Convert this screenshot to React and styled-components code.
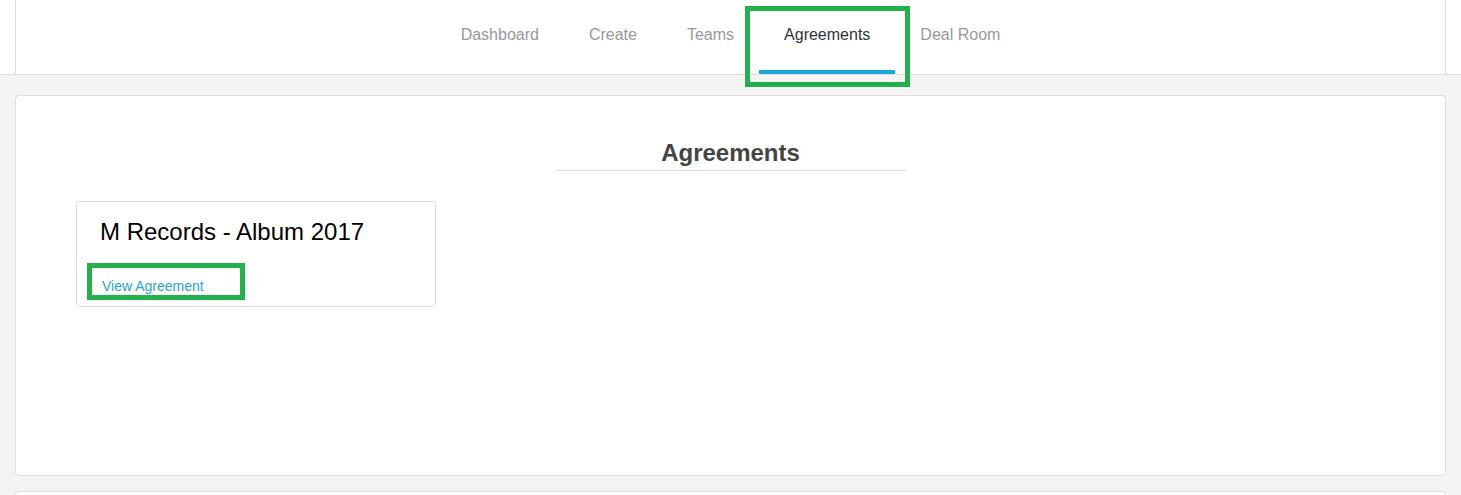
import React from 'react';
import styled, { createGlobalStyle } from 'styled-components';

const GlobalStyle = createGlobalStyle`
  body {
    margin: 0;
    background: #f4f4f4;
    font-family: "Liberation Sans", Arial, sans-serif;
  }
`;

// green highlight drawn over the reference
const highlight = `
  content: '';
  position: absolute;
  border: 5px solid #22b14c;
  box-sizing: border-box;
  pointer-events: none;
`;

const Header = styled.header`
  background: #fff;
  border-bottom: 1px solid #ddd;
`;

const HeaderInner = styled.div`
  margin: 0 15px;
  height: 74px;
  border-left: 1px solid #ddd;
  border-right: 1px solid #ddd;
  display: flex;
  justify-content: center;
`;

const NavItem = styled.a`
  position: relative;
  padding: 25px 25px 0;
  height: 74px;
  box-sizing: border-box;
  line-height: 20px;
  font-size: 16px;
  color: ${p => (p.$active ? '#333' : '#999')};
  text-decoration: none;
  cursor: pointer;

  ${p => p.$active && `
    &::before {
      content: '';
      position: absolute;
      left: 0;
      right: 0;
      bottom: 0;
      height: 4px;
      background: #19a8dc;
    }
    &::after {
      ${highlight}
      left: -14px;
      top: 6px;
      width: 165px;
      height: 81px;
      z-index: 2;
    }
  `}
`;

const Main = styled.main`
  padding: 20px 15px 0;
  display: flex;
  flex-direction: column;
  gap: 15px;
`;

const Panel = styled.section`
  box-sizing: border-box;
  background: #fff;
  border: 1px solid #ddd;
  border-radius: 4px;
  height: 381px;
  padding: 43px 60px 0;
`;

const Heading = styled.h2`
  width: 350px;
  margin: 0 auto;
  padding-bottom: 3px;
  border-bottom: 1px solid #ddd;
  text-align: center;
  font-size: 24px;
  line-height: 28px;
  font-weight: bold;
  color: #444;
`;

const CardList = styled.div`
  display: flex;
  gap: 20px;
  margin-top: 30px;
`;

const Card = styled.div`
  width: 358px;
  border: 1px solid #ddd;
  border-radius: 3px;
  padding: 16px 0 10px;
`;

const CardTitle = styled.h3`
  margin: 0;
  padding-left: 23px;
  font-size: 24px;
  line-height: 28px;
  font-weight: normal;
  color: #000;
`;

const CardLink = styled.a`
  position: relative;
  display: inline-block;
  margin: 30px 0 0 25px;
  font-size: 14px;
  line-height: 20px;
  color: #23a5de;
  text-decoration: none;
  cursor: pointer;

  &::after {
    ${highlight}
    left: -15px;
    top: -13px;
    width: 158px;
    height: 37px;
  }
`;

const NextPanel = styled.section`
  background: #fff;
  border: 1px solid #ddd;
  border-radius: 4px;
  height: 40px;
`;

const tabs = ['Dashboard', 'Create', 'Teams', 'Agreements', 'Deal Room'];

const agreements = [{ id: 1, title: 'M Records - Album 2017' }];

const App = () => {
    return (
        <>
            <GlobalStyle />
            <Header>
                <HeaderInner>
                    {tabs.map(t => (
                        <NavItem key={t} $active={t === 'Agreements'}>{t}</NavItem>
                    ))}
                </HeaderInner>
            </Header>
            <Main>
                <Panel>
                    <Heading>Agreements</Heading>
                    <CardList>
                        {agreements.map(a => (
                            <Card key={a.id}>
                                <CardTitle>{a.title}</CardTitle>
                                <CardLink>View Agreement</CardLink>
                            </Card>
                        ))}
                    </CardList>
                </Panel>
                <NextPanel />
            </Main>
        </>
    );
};

export default App;
